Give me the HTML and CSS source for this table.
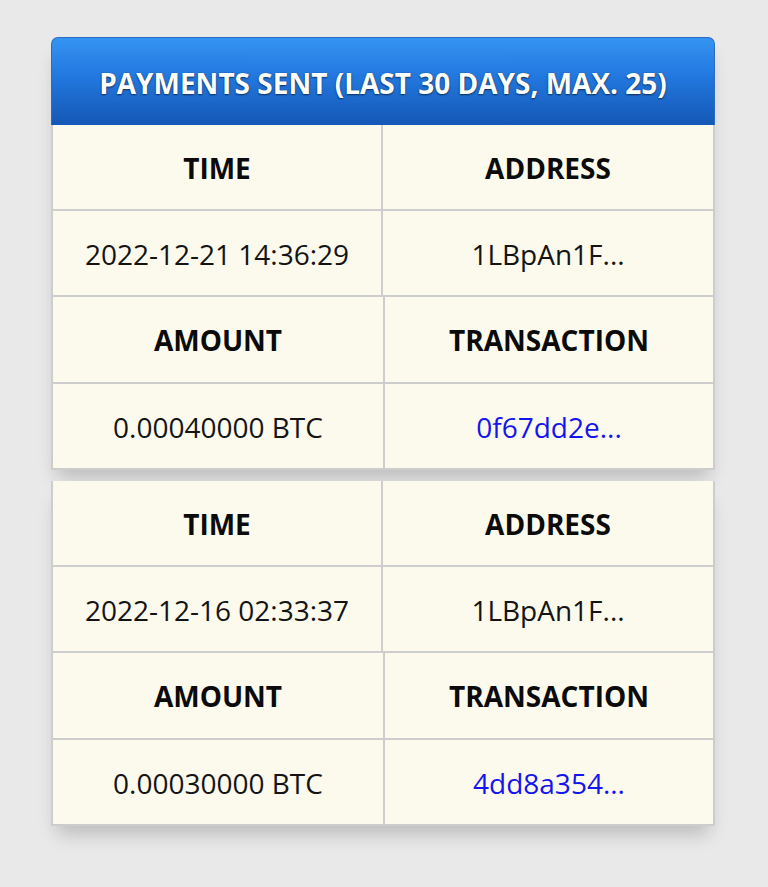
FILE: index.html
```html
<!DOCTYPE html>
<html>
<head>
<meta charset="utf-8">
<link rel="stylesheet" href="styles.css">
</head>
<body>
<div class="page">
  <section class="group">
    <h1 class="title">PAYMENTS SENT (LAST 30 DAYS, MAX. 25)</h1>
    <div class="body">
      <div class="tbl tbl-a">
        <div class="cell head">TIME</div>
        <div class="cell head">ADDRESS</div>
        <div class="cell">2022-12-21 14:36:29</div>
        <div class="cell">1LBpAn1F...</div>
      </div>
      <div class="tbl tbl-b">
        <div class="cell head">AMOUNT</div>
        <div class="cell head">TRANSACTION</div>
        <div class="cell">0.00040000 BTC</div>
        <div class="cell"><a class="tx" href="#">0f67dd2e...</a></div>
      </div>
    </div>
  </section>
  <section class="group">
    <div class="body">
      <div class="tbl tbl-a">
        <div class="cell head">TIME</div>
        <div class="cell head">ADDRESS</div>
        <div class="cell">2022-12-16 02:33:37</div>
        <div class="cell">1LBpAn1F...</div>
      </div>
      <div class="tbl tbl-b">
        <div class="cell head">AMOUNT</div>
        <div class="cell head">TRANSACTION</div>
        <div class="cell">0.00030000 BTC</div>
        <div class="cell"><a class="tx" href="#">4dd8a354...</a></div>
      </div>
    </div>
  </section>
</div>
</body>
</html>
```
FILE: styles.css
```css
html, body {
  margin: 0;
  padding: 0;
}
body {
  background: #e9e9e9;
  font-family: "Open Sans", "Noto Sans", sans-serif;
  color: #111;
  height: 887px;
  overflow: hidden;
}
.page {
  width: 664px;
  margin: 0 0 0 51px;
  padding-top: 37px;
  display: flex;
  flex-direction: column;
  gap: 11px;
}
.group {
  position: relative;
  box-shadow: 0 14px 18px -6px rgba(0, 0, 0, 0.2);
}
.title {
  margin: 0;
  height: 88px;
  padding-top: 2px;
  box-sizing: border-box;
  display: flex;
  align-items: center;
  justify-content: center;
  background: linear-gradient(#3494f2 0%, #2277de 45%, #1458b6 100%);
  border: 1px solid #2a6cc4;
  border-bottom: none;
  border-radius: 7px 7px 0 0;
  color: #fff;
  font-size: 28px;
  font-weight: 700;
  text-shadow: 0 1px 2px rgba(0, 0, 0, 0.55), 0 0 1px rgba(0, 0, 0, 0.4);
}
.body {
  background: #cdcdcd;
  padding: 0 2px 2px 2px;
  display: flex;
  flex-direction: column;
  gap: 2px;
}
.tbl {
  display: grid;
  gap: 2px;
}
.tbl-a {
  grid-template-columns: 328px 1fr;
}
.tbl-b {
  grid-template-columns: 330px 1fr;
}
.cell {
  background: #fcfaec;
  height: 84px;
  padding-top: 1px;
  box-sizing: border-box;
  display: flex;
  align-items: center;
  justify-content: center;
  font-size: 28px;
  color: #141414;
}
.tbl-b .head {
  height: 85px;
}
.head {
  font-weight: 700;
  color: #0b0b0b;
}
.tx {
  color: #1414f0;
  text-decoration: none;
}
```
